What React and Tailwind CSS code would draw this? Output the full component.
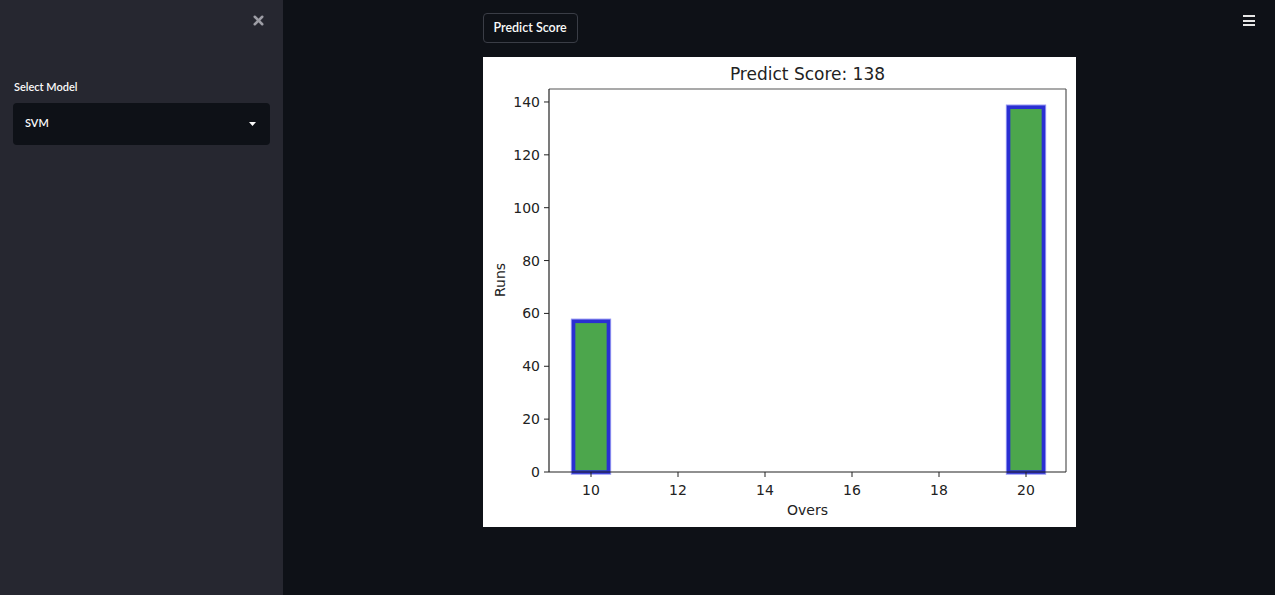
import React from 'react';
import { X } from 'lucide-react';

const scores = [
    { over: 10, runs: 57 },
    { over: 20, runs: 138 },
];

const ax = { left: 66, right: 583, top: 32, bottom: 415 };
const yOf = (v) => ax.bottom - v * 2.643;
const xOf = (o) => 108 + (o - 10) * 43.5;

const ScoreChart = () => {
    const yTicks = [0, 20, 40, 60, 80, 100, 120, 140];
    const xTicks = [10, 12, 14, 16, 18, 20];
    return (
        <svg width="593" height="470" viewBox="0 0 593 470" className="block">
            <rect x="0" y="0" width="593" height="470" fill="#ffffff" />
            <text x="324.5" y="23" textAnchor="middle" fontSize="17" fill="#222" fontFamily="DejaVu Sans, sans-serif">
                Predict Score: 138
            </text>

            {/* bars */}
            {scores.map((s) => {
                const w = 34.8;
                const x = xOf(s.over) - w / 2;
                const y = yOf(s.runs);
                return (
                    <g key={s.over}>
                        <rect x={x} y={y} width={w} height={ax.bottom - y} fill="#4ca64c" stroke="#9496f2" strokeWidth="5.5" />
                        <rect x={x} y={y} width={w} height={ax.bottom - y} fill="#4ca64c" stroke="#2a2fd2" strokeWidth="3.5" />
                    </g>
                );
            })}

            {/* frame */}
            <line x1={ax.left} y1={ax.top} x2={ax.right} y2={ax.top} stroke="#555" strokeWidth="1.2" />
            <line x1={ax.right} y1={ax.top} x2={ax.right} y2={ax.bottom} stroke="#555" strokeWidth="1.2" />
            <line x1={ax.left} y1={ax.top} x2={ax.left} y2={ax.bottom} stroke="#222" strokeWidth="1.2" />
            <line x1={ax.left} y1={ax.bottom} x2={ax.right} y2={ax.bottom} stroke="#222" strokeWidth="1.2" />

            {yTicks.map((t) => (
                <g key={t}>
                    <line x1={ax.left - 5} y1={yOf(t)} x2={ax.left} y2={yOf(t)} stroke="#222" strokeWidth="1" />
                    <text x={ax.left - 9} y={yOf(t) + 5} textAnchor="end" fontSize="14" fill="#222" fontFamily="DejaVu Sans, sans-serif">
                        {t}
                    </text>
                </g>
            ))}
            {xTicks.map((t) => (
                <g key={t}>
                    <line x1={xOf(t)} y1={ax.bottom} x2={xOf(t)} y2={ax.bottom + 5} stroke="#222" strokeWidth="1" />
                    <text x={xOf(t)} y={ax.bottom + 23} textAnchor="middle" fontSize="14" fill="#222" fontFamily="DejaVu Sans, sans-serif">
                        {t}
                    </text>
                </g>
            ))}

            <text x="324.5" y="458" textAnchor="middle" fontSize="14" fill="#222" fontFamily="DejaVu Sans, sans-serif">
                Overs
            </text>
            <text x="22" y="223" textAnchor="middle" fontSize="14" fill="#222" fontFamily="DejaVu Sans, sans-serif" transform="rotate(-90 22 223)">
                Runs
            </text>
        </svg>
    );
};

const App = () => {
    return (
        <div className="flex w-[1275px] h-[595px] overflow-hidden bg-[#0e1117] font-['Lato',sans-serif] text-white">
            {/* Sidebar */}
            <aside className="w-[283px] shrink-0 h-full bg-[#262730] flex flex-col px-[13px]">
                <div className="flex justify-end pt-[13px] pr-[4px]">
                    <X size={15} strokeWidth={4} className="text-[#9d9da5]" />
                </div>
                <label className="mt-[51px] ml-[1px] text-[11px] font-semibold text-[#fafafa]">Select Model</label>
                <div className="mt-[7px] h-[42px] w-[257px] rounded-[4px] bg-[#0e1117] flex items-center justify-between pl-[12px] pr-[14px]">
                    <span className="text-[11px] font-semibold text-[#fafafa]">SVM</span>
                    <svg width="7" height="4" viewBox="0 0 7 4">
                        <path d="M0 0 L7 0 L3.5 4 Z" fill="#fafafa" />
                    </svg>
                </div>
            </aside>

            {/* Main */}
            <main className="flex-1 relative flex justify-center">
                <div className="w-[593px] pt-[13px] flex flex-col items-start">
                    <button className="h-[30px] px-[10px] rounded-[4px] border border-[#3a3d46] bg-[#0e1117] text-[12.5px] font-semibold text-[#fafafa]">
                        Predict Score
                    </button>
                    <div className="mt-[14px]">
                        <ScoreChart />
                    </div>
                </div>
                <div className="absolute top-[15px] right-[20px] flex flex-col gap-[2.5px]">
                    <span className="block w-[12px] h-[2px] bg-[#e6e6e6]" />
                    <span className="block w-[12px] h-[2px] bg-[#e6e6e6]" />
                    <span className="block w-[12px] h-[2px] bg-[#e6e6e6]" />
                </div>
            </main>
        </div>
    );
};

export default App;
